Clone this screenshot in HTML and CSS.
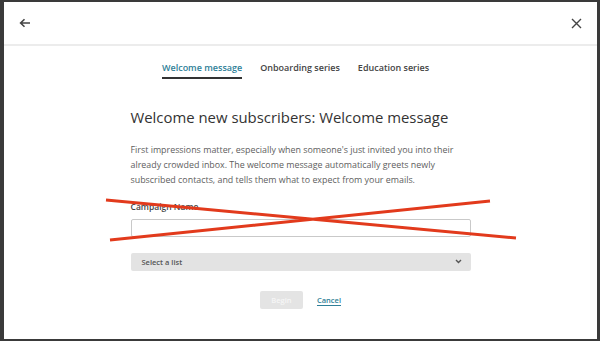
FILE: index.html
```html
<!DOCTYPE html>
<html>
<head>
<meta charset="utf-8">
<link rel="stylesheet" href="styles.css">
</head>
<body>
<div class="modal">
  <div class="header">
    <svg class="icon" width="12" height="10" viewBox="0 0 12 10"><path d="M11 5H2M5.5 1.2L1.6 5l3.9 3.8" fill="none" stroke="#444" stroke-width="1.6"/></svg>
    <svg class="icon" width="11" height="11" viewBox="0 0 11 11"><path d="M1 1l9 9M10 1l-9 9" fill="none" stroke="#444" stroke-width="1.4"/></svg>
  </div>
  <div class="tabs">
    <span class="tab active">Welcome message</span>
    <span class="tab">Onboarding series</span>
    <span class="tab">Education series</span>
  </div>
  <div class="content">
    <h1 class="title">Welcome new subscribers: Welcome message</h1>
    <p class="desc">First impressions matter, especially when someone's just invited you into their already crowded inbox. The welcome message automatically greets newly subscribed contacts, and tells them what to expect from your emails.</p>
    <label class="label">Campaign Name</label>
    <div class="input"></div>
    <div class="select"><span>Select a list</span><svg width="7" height="5" viewBox="0 0 7 5"><path d="M1 1l2.5 2.5L6 1" fill="none" stroke="#555" stroke-width="1.4"/></svg></div>
    <div class="actions">
      <span class="btn">Begin</span>
      <span class="cancel">Cancel</span>
    </div>
  </div>
  <svg class="cross" width="600" height="341" viewBox="0 0 600 341"><path d="M106 200L516 238M110 240L490 201" stroke="#e23a1c" stroke-width="3" fill="none"/></svg>
</div>
</body>
</html>
```
FILE: styles.css
```css
html, body { margin: 0; padding: 0; }
body { background: #3a3a3a; width: 600px; height: 341px; overflow: hidden; font-family: "Open Sans", sans-serif; }
.modal { position: relative; margin: 2px 0 0 4px; width: 593px; height: 337px; background: #fff; }
.header { height: 42px; border-bottom: 2px solid #ececec; display: flex; align-items: center; justify-content: space-between; padding: 0 15px 0 15px; }
.cross { position: absolute; left: -4px; top: -2px; pointer-events: none; }
.tabs { display: flex; justify-content: center; gap: 18px; padding-top: 14px; margin-left: -10px; }
.tab { font-size: 9px; font-weight: 600; color: #444; padding-bottom: 2px; border-bottom: 2px solid transparent; line-height: 15px; }
.tab.active { color: #2f7f98; border-bottom-color: #333; }
.content { width: 340px; margin: 0 auto; }
.title { font-size: 14.9px; font-weight: 400; color: #333; margin: 26px 0 0; line-height: 24px; white-space: nowrap; }
.desc { font-size: 8.9px; color: #5e5e5e; line-height: 15px; margin: 12.5px 0 0; }
.label { display: block; font-size: 8.5px; font-weight: 600; color: #444; margin-top: 13px; line-height: 14px; }
.input { height: 16px; border: 1px solid #c9c9c9; border-radius: 2px; margin-top: 5px; }
.select { height: 18px; background: #e3e3e3; border-radius: 2px; margin-top: 16px; display: flex; align-items: center; justify-content: space-between; padding: 0 9px 0 11px; font-size: 7.5px; font-weight: 600; color: #555; }
.actions { display: flex; justify-content: center; align-items: center; gap: 14px; margin-top: 20px; }
.btn { width: 43px; height: 18px; background: #e4e4e4; border-radius: 2px; color: #f6f6f6; font-size: 7.5px; font-weight: 600; display: flex; align-items: center; justify-content: center; }
.cancel { font-size: 7.5px; font-weight: 600; color: #2f7f98; text-decoration: underline; text-underline-offset: 2px; }
```
